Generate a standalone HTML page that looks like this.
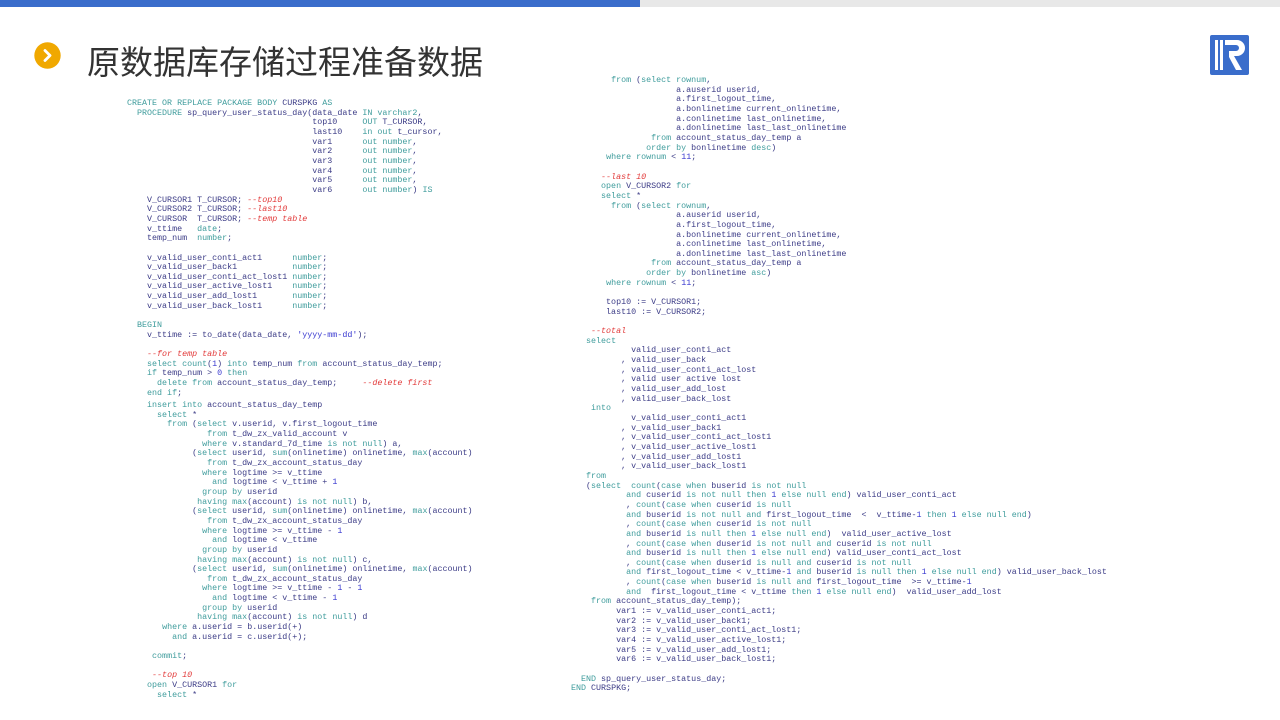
<!DOCTYPE html>
<html><head><meta charset="utf-8"><style>
body{margin:0;width:1280px;height:720px;background:#fff;position:relative;overflow:hidden}
.bar1{position:absolute;left:0;top:0;width:640px;height:7px;background:#3a6dcb}
.bar2{position:absolute;left:640px;top:0;width:640px;height:7px;background:#e8e8e8}
.title{position:absolute;left:87px;top:36px;font:33px "Liberation Sans","Noto Sans CJK SC",sans-serif;color:#333;letter-spacing:0px;white-space:nowrap}
pre{position:absolute;margin:0;font-family:"Liberation Mono",monospace;font-size:8.35px;line-height:9.65px;color:#3b3b86}
.k{color:#3f9c9c}.c{color:#e23a3a;font-style:italic}.n{color:#3a3ad0}
</style></head><body>
<div class="bar1"></div><div class="bar2"></div>
<svg style="position:absolute;left:34px;top:42px" width="27" height="27"><circle cx="13.5" cy="13.5" r="13.2" fill="#f0a800"/><path d="M11 8.5l5 5-5 5" stroke="#fff" stroke-width="2.8" fill="none" stroke-linecap="round" stroke-linejoin="round"/></svg>
<div class="title">原数据库存储过程准备数据</div>
<svg style="position:absolute;left:1210px;top:35px" width="40" height="41" viewBox="0 0 40 41"><rect x="0" y="0" width="39" height="40" rx="2" fill="#3a6dcb"/><rect x="5" y="5" width="3" height="30" fill="#fff"/><rect x="10" y="5" width="3" height="30" fill="#fff"/><path d="M15 5h12a8 8 0 0 1 0 16h-3l8 14h-6l-7-13V16h7a3 3 0 0 0 0-6h-11z" fill="#fff"/></svg>
<pre style="left:127px;top:99px"><span class="k">CREATE OR REPLACE PACKAGE BODY</span> CURSPKG <span class="k">AS</span>
  <span class="k">PROCEDURE</span> sp_query_user_status_day(data_date <span class="k">IN varchar2</span>,
                                     top10     <span class="k">OUT</span> T_CURSOR,
                                     last10    <span class="k">in out</span> t_cursor,
                                     var1      <span class="k">out number</span>,
                                     var2      <span class="k">out number</span>,
                                     var3      <span class="k">out number</span>,
                                     var4      <span class="k">out number</span>,
                                     var5      <span class="k">out number</span>,
                                     var6      <span class="k">out number</span>) <span class="k">IS</span>
    V_CURSOR1 T_CURSOR; <span class="c">--top10</span>
    V_CURSOR2 T_CURSOR; <span class="c">--last10</span>
    V_CURSOR  T_CURSOR; <span class="c">--temp table</span>
    v_ttime   <span class="k">date</span>;
    temp_num  <span class="k">number</span>;

    v_valid_user_conti_act1      <span class="k">number</span>;
    v_valid_user_back1           <span class="k">number</span>;
    v_valid_user_conti_act_lost1 <span class="k">number</span>;
    v_valid_user_active_lost1    <span class="k">number</span>;
    v_valid_user_add_lost1       <span class="k">number</span>;
    v_valid_user_back_lost1      <span class="k">number</span>;

  <span class="k">BEGIN</span>
    v_ttime := to_date(data_date, <span class="n">'yyyy-mm-dd'</span>);

    <span class="c">--for temp table</span>
    <span class="k">select count</span>(<span class="n">1</span>) <span class="k">into</span> temp_num <span class="k">from</span> account_status_day_temp;
    <span class="k">if</span> temp_num &gt; <span class="n">0</span> <span class="k">then</span>
      <span class="k">delete from</span> account_status_day_temp;     <span class="c">--delete first</span>
    <span class="k">end if</span>;</pre>
<pre style="left:127px;top:401px">    <span class="k">insert into</span> account_status_day_temp
      <span class="k">select</span> *
        <span class="k">from</span> (<span class="k">select</span> v.userid, v.first_logout_time
                <span class="k">from</span> t_dw_zx_valid_account v
               <span class="k">where</span> v.standard_7d_time <span class="k">is not null</span>) a,
             (<span class="k">select</span> userid, <span class="k">sum</span>(onlinetime) onlinetime, <span class="k">max</span>(account)
                <span class="k">from</span> t_dw_zx_account_status_day
               <span class="k">where</span> logtime &gt;= v_ttime
                 <span class="k">and</span> logtime &lt; v_ttime + <span class="n">1</span>
               <span class="k">group by</span> userid
              <span class="k">having max</span>(account) <span class="k">is not null</span>) b,
             (<span class="k">select</span> userid, <span class="k">sum</span>(onlinetime) onlinetime, <span class="k">max</span>(account)
                <span class="k">from</span> t_dw_zx_account_status_day
               <span class="k">where</span> logtime &gt;= v_ttime - <span class="n">1</span>
                 <span class="k">and</span> logtime &lt; v_ttime
               <span class="k">group by</span> userid
              <span class="k">having max</span>(account) <span class="k">is not null</span>) c,
             (<span class="k">select</span> userid, <span class="k">sum</span>(onlinetime) onlinetime, <span class="k">max</span>(account)
                <span class="k">from</span> t_dw_zx_account_status_day
               <span class="k">where</span> logtime &gt;= v_ttime - <span class="n">1</span> - <span class="n">1</span>
                 <span class="k">and</span> logtime &lt; v_ttime - <span class="n">1</span>
               <span class="k">group by</span> userid
              <span class="k">having max</span>(account) <span class="k">is not null</span>) d
       <span class="k">where</span> a.userid = b.userid(+)
         <span class="k">and</span> a.userid = c.userid(+);

     <span class="k">commit</span>;

     <span class="c">--top 10</span>
    <span class="k">open</span> V_CURSOR1 <span class="k">for</span>
      <span class="k">select</span> *</pre>
<pre style="left:571px;top:76px">        <span class="k">from</span> (<span class="k">select rownum</span>,
                     a.auserid userid,
                     a.first_logout_time,
                     a.bonlinetime current_onlinetime,
                     a.conlinetime last_onlinetime,
                     a.donlinetime last_last_onlinetime
                <span class="k">from</span> account_status_day_temp a
               <span class="k">order by</span> bonlinetime <span class="k">desc</span>)
       <span class="k">where rownum</span> &lt; <span class="n">11</span>;

      <span class="c">--last 10</span>
      <span class="k">open</span> V_CURSOR2 <span class="k">for</span>
      <span class="k">select</span> *
        <span class="k">from</span> (<span class="k">select rownum</span>,
                     a.auserid userid,
                     a.first_logout_time,
                     a.bonlinetime current_onlinetime,
                     a.conlinetime last_onlinetime,
                     a.donlinetime last_last_onlinetime
                <span class="k">from</span> account_status_day_temp a
               <span class="k">order by</span> bonlinetime <span class="k">asc</span>)
       <span class="k">where rownum</span> &lt; <span class="n">11</span>;

       top10 := V_CURSOR1;
       last10 := V_CURSOR2;

    <span class="c">--total</span>
   <span class="k">select</span>
            valid_user_conti_act
          , valid_user_back
          , valid_user_conti_act_lost
          , valid user active lost
          , valid_user_add_lost
          , valid_user_back_lost
    <span class="k">into</span>
            v_valid_user_conti_act1
          , v_valid_user_back1
          , v_valid_user_conti_act_lost1
          , v_valid_user_active_lost1
          , v_valid_user_add_lost1
          , v_valid_user_back_lost1
   <span class="k">from</span>
   (<span class="k">select</span>  <span class="k">count</span>(<span class="k">case when</span> buserid <span class="k">is not null</span>
           <span class="k">and</span> cuserid <span class="k">is not null then</span> <span class="n">1</span> <span class="k">else null end</span>) valid_user_conti_act
           , <span class="k">count</span>(<span class="k">case when</span> cuserid <span class="k">is null</span>
           <span class="k">and</span> buserid <span class="k">is not null and</span> first_logout_time  &lt;  v_ttime-<span class="n">1</span> <span class="k">then</span> <span class="n">1</span> <span class="k">else null end</span>)
           , <span class="k">count</span>(<span class="k">case when</span> cuserid <span class="k">is not null</span>
           <span class="k">and</span> buserid <span class="k">is null then</span> <span class="n">1</span> <span class="k">else null end</span>)  valid_user_active_lost
           , <span class="k">count</span>(<span class="k">case when</span> duserid <span class="k">is not null and</span> cuserid <span class="k">is not null</span>
           <span class="k">and</span> buserid <span class="k">is null then</span> <span class="n">1</span> <span class="k">else null end</span>) valid_user_conti_act_lost
           , <span class="k">count</span>(<span class="k">case when</span> duserid <span class="k">is null and</span> cuserid <span class="k">is not null</span>
           <span class="k">and</span> first_logout_time &lt; v_ttime-<span class="n">1</span> <span class="k">and</span> buserid <span class="k">is null then</span> <span class="n">1</span> <span class="k">else null end</span>) valid_user_back_lost
           , <span class="k">count</span>(<span class="k">case when</span> buserid <span class="k">is null and</span> first_logout_time  &gt;= v_ttime-<span class="n">1</span>
           <span class="k">and</span>  first_logout_time &lt; v_ttime <span class="k">then</span> <span class="n">1</span> <span class="k">else null end</span>)  valid_user_add_lost
    <span class="k">from</span> account_status_day_temp);
         var1 := v_valid_user_conti_act1;
         var2 := v_valid_user_back1;
         var3 := v_valid_user_conti_act_lost1;
         var4 := v_valid_user_active_lost1;
         var5 := v_valid_user_add_lost1;
         var6 := v_valid_user_back_lost1;

  <span class="k">END</span> sp_query_user_status_day;
<span class="k">END</span> CURSPKG;</pre>
</body></html>
